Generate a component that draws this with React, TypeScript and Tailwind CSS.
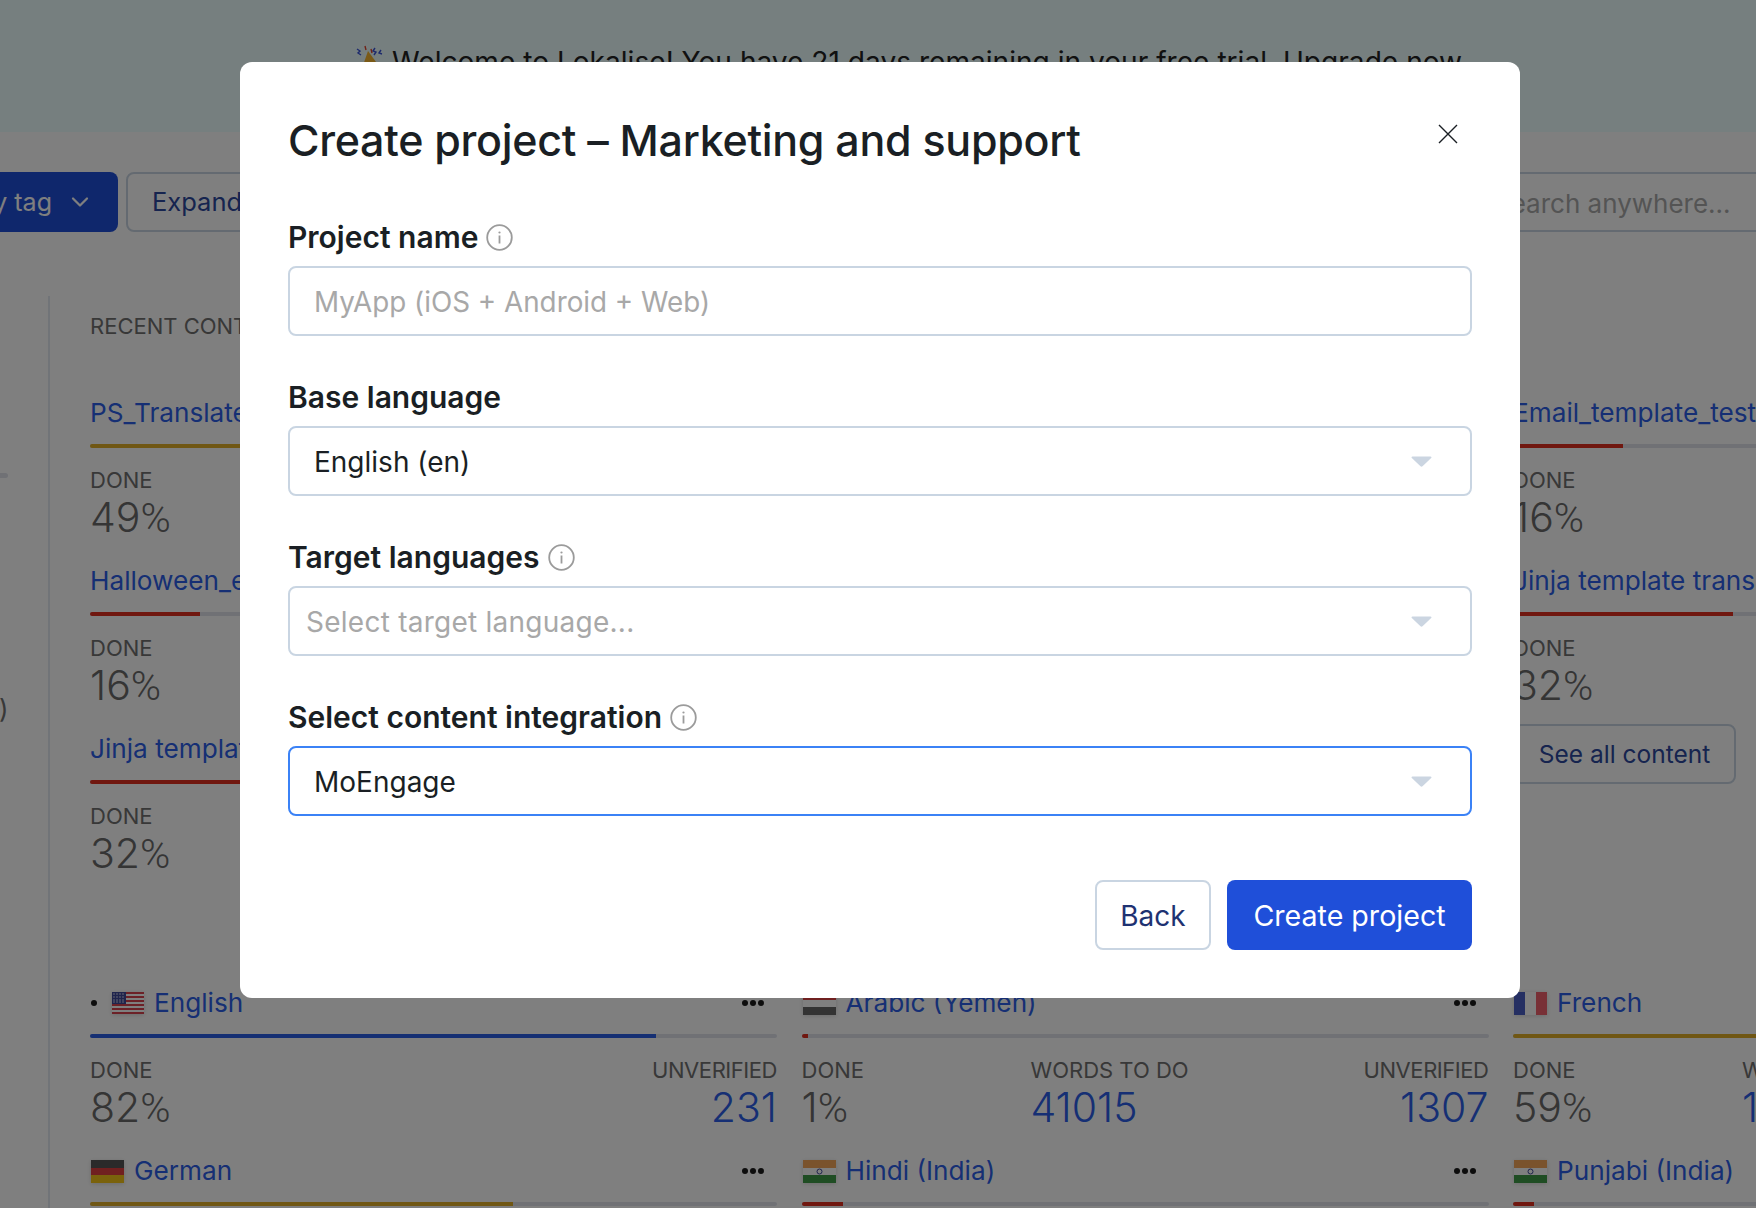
import { ChevronDown } from 'lucide-react';

const amber = 'bg-[#e0ae28]';
const red = 'bg-[#e02f1f]';
const blue = 'bg-[#2a5fe6]';

type Stat = { label: string; value: string; link?: boolean };

function Flag({ name }: { name: string }) {
	if (name === 'us') {
		return (
			<svg width="32" height="22" viewBox="0 0 32 22" className="shrink-0 drop-shadow-sm">
				<rect width="32" height="22" fill="#fff" />
				{[0, 4, 8, 12, 16, 20].map((y) => (
					<rect key={y} y={y} width="32" height="2" fill="#d8424f" />
				))}
				<rect width="14" height="12" fill="#3f4a9a" />
				{[2, 5, 8, 11].map((x) =>
					[2, 5, 8, 10].map((y) => <circle key={`${x}-${y}`} cx={x} cy={y} r="0.7" fill="#fff" />),
				)}
			</svg>
		);
	}
	if (name === 'de') {
		return (
			<svg width="33" height="23" viewBox="0 0 33 23" className="shrink-0 drop-shadow-sm">
				<rect width="33" height="8" fill="#555" />
				<rect y="8" width="33" height="8" fill="#e04040" />
				<rect y="15" width="33" height="8" fill="#f5c518" />
			</svg>
		);
	}
	if (name === 'ye') {
		return (
			<svg width="33" height="23" viewBox="0 0 33 23" className="shrink-0 drop-shadow-sm">
				<rect width="33" height="8" fill="#e04040" />
				<rect y="8" width="33" height="8" fill="#fff" />
				<rect y="15" width="33" height="8" fill="#666" />
			</svg>
		);
	}
	if (name === 'fr') {
		return (
			<svg width="33" height="23" viewBox="0 0 33 23" className="shrink-0 drop-shadow-sm">
				<rect width="11" height="23" fill="#4a5fc4" />
				<rect x="11" width="11" height="23" fill="#fff" />
				<rect x="22" width="11" height="23" fill="#f0616d" />
			</svg>
		);
	}
	return (
		<svg width="33" height="23" viewBox="0 0 33 23" className="shrink-0 drop-shadow-sm">
			<rect width="33" height="8" fill="#f5a65a" />
			<rect y="8" width="33" height="8" fill="#fff" />
			<rect y="15" width="33" height="8" fill="#3f9a46" />
			<circle cx="16.5" cy="11.5" r="2.5" fill="none" stroke="#3f4a9a" strokeWidth="1" />
		</svg>
	);
}

function Dots() {
	return (
		<div className="ml-auto mr-[13px] flex gap-[2px]">
			<span className="h-[6px] w-[6px] rounded-full bg-[#1a1a1a]" />
			<span className="h-[6px] w-[6px] rounded-full bg-[#1a1a1a]" />
			<span className="h-[6px] w-[6px] rounded-full bg-[#1a1a1a]" />
		</div>
	);
}

function Value({ text }: { text: string }) {
	if (!text.endsWith('%')) return <>{text}</>;
	return (
		<>
			{text.slice(0, -1)}
			<span className="font-['Roboto',sans-serif]">%</span>
		</>
	);
}

function Card({
	title,
	flag,
	bullet,
	pct,
	color,
	stats,
	menu,
}: {
	title: string;
	flag?: string;
	bullet?: boolean;
	pct: number;
	color: string;
	stats: (Stat | null)[];
	menu?: boolean;
}) {
	return (
		<div className="h-[168px] min-w-0">
			<div className="flex h-[34px] items-center whitespace-nowrap text-[26.2px] leading-[34px] text-[#2c5fe8]">
				{bullet && <span className="ml-[1px] mr-[14px] h-[6px] w-[6px] rounded-full bg-[#1a1a1a]" />}
				{flag && (
					<span className="ml-[1px] mr-[10px] flex">
						<Flag name={flag} />
					</span>
				)}
				<span>{title}</span>
				{menu && <Dots />}
			</div>
			<div className="mt-[14px] h-[4px] overflow-hidden rounded-full bg-[#e0e3eb]">
				<div className={`h-full ${color}`} style={{ width: `${pct}%` }} />
			</div>
			<div className="mt-[18px] grid grid-cols-3">
				{stats.map((s, i) =>
					s ? (
						<div key={i} className={i === 2 ? 'text-right' : ''}>
							<div
								className={`whitespace-nowrap text-[22px] leading-[28px] text-[#707070] ${
									i === 2 ? 'tracking-[-0.45px]' : ''
								}`}
							>
								{s.label}
							</div>
							<div
								className={`-mt-[2px] whitespace-nowrap text-[41px] leading-[50px] font-[350] ${
									s.link ? 'text-[#2c5fe8]' : 'text-[#6a6a6a]'
								}`}
							>
								<Value text={s.value} />
							</div>
						</div>
					) : (
						<div key={i} />
					),
				)}
			</div>
		</div>
	);
}

function done(value: string): (Stat | null)[] {
	return [{ label: 'DONE', value }, null, null];
}

function InfoIcon() {
	return (
		<svg width="27" height="27" viewBox="0 0 27 27" className="ml-[8px] shrink-0">
			<circle cx="13.5" cy="13.5" r="12.3" fill="none" stroke="#9b9b9b" strokeWidth="1.8" />
			<circle cx="13.5" cy="8.5" r="1.1" fill="#9b9b9b" />
			<rect x="12.6" y="11.5" width="1.8" height="8" fill="#9b9b9b" />
		</svg>
	);
}

function Caret() {
	return (
		<svg width="21" height="11" viewBox="0 0 21 11" className="shrink-0">
			<path d="M1.5 0.5h18c.9 0 1.3 1 .7 1.6l-8.7 8.2c-.6.5-1.4.5-2 0L.8 2.1C.2 1.5.6.5 1.5.5z" fill="#cbd5e1" />
		</svg>
	);
}

function Field({ label, info, children }: { label: string; info?: boolean; children: React.ReactNode }) {
	return (
		<div className="mb-[41px]">
			<div className="mb-[9px] flex h-[40px] items-center text-[30px] leading-[40px] font-semibold text-[#1a1f24]">
				{label}
				{info && <InfoIcon />}
			</div>
			{children}
		</div>
	);
}

function SelectBox({
	text,
	muted,
	focused,
}: {
	text: string;
	muted?: boolean;
	focused?: boolean;
}) {
	return (
		<div
			className={`flex h-[70px] items-center justify-between rounded-lg border-2 bg-white pr-[38px] text-[28px] ${
				focused ? 'border-[#3b82f6]' : 'border-[#c9d5e2]'
			} ${muted ? 'pl-[16px] text-[#a8a8a8]' : 'pl-[24px] text-[#1a1f24]'}`}
		>
			<span className={`pt-[2px] ${muted ? 'tracking-[0.25px]' : ''}`}>{text}</span>
			<Caret />
		</div>
	);
}

export default function App() {
	return (
		<div className="relative h-[1208px] overflow-hidden bg-white font-['Inter',sans-serif]">
			<div className="flex h-[132px] items-start bg-[#ecfeff] pl-[355px] pt-[45px]">
				<svg width="30" height="30" viewBox="0 0 30 30" className="mr-[7px] shrink-0">
					<path d="M5 29 L13 6 L24 21 Z" fill="#f5b52e" />
					<path d="M2 4l3 2-2 2 3 2M20 3l-2 3 3 1-2 3M26 5l-2 3 3 1" fill="none" stroke="#3a55d9" strokeWidth="1.4" />
					<path d="M10 1l1 4M16 4l1 4" fill="none" stroke="#e0452f" strokeWidth="1.4" />
				</svg>
				<span className="whitespace-nowrap text-[28.1px] leading-[34px] text-[#222]">
					Welcome to Lokalise! You have 21 days remaining in your free trial. Upgrade now
				</span>
			</div>

			<div className="mt-[40px] flex h-[60px]">
				<div className="flex w-[118px] shrink-0 items-center justify-end gap-[14px] overflow-hidden rounded-r-lg bg-[#1f4fd9] pr-[24px] text-[25px] whitespace-nowrap text-white">
					<span className="pt-[2px]">Filter by tag</span>
					<ChevronDown size={28} strokeWidth={1.9} className="shrink-0" />
				</div>
				<div className="ml-[8px] flex w-[300px] shrink-0 items-center rounded-lg border-2 border-[#c9d5e2] px-[24px] text-[25.5px] whitespace-nowrap text-[#2c489e]">
					Expand all
				</div>
				<div className="ml-[1040px] flex w-[500px] shrink-0 items-center rounded-lg border-2 border-[#c9d5e2] pl-[26px] pt-[2px] text-[26px] text-[#a9a9a9]">
					Search anywhere...
				</div>
			</div>

			<div className="mt-[64px] flex">
				<div className="h-[912px] w-[50px] shrink-0 border-r-2 border-[#e2e8f0] pt-[177px]">
					<div className="h-[5px] w-[8px] rounded-r-full bg-[#e0e3eb]" />
					<div className="mt-[214px] text-[26px] leading-[34px] text-[#707070]">
						<span className="ml-[-1px]">)</span>
					</div>
				</div>
				<div className="pl-[40px]">
					<div className="mt-[15px] h-[30px] whitespace-nowrap text-[22px] leading-[30px] text-[#707070]">RECENT CONTENT</div>
					<div className="mt-[55px] grid grid-cols-[repeat(3,687px)] gap-x-[24.5px]">
						<Card title="PS_Translate_demo" pct={49} color={amber} stats={done('49%')} />
						<Card title="Onboarding_email" pct={60} color={amber} stats={done('60%')} />
						<Card title="Email_template_test" pct={16} color={red} stats={done('16%')} />
						<Card title="Halloween_email" pct={16} color={red} stats={done('16%')} />
						<Card title="Welcome_series" pct={25} color={red} stats={done('25%')} />
						<Card title="Jinja template translation" pct={32} color={red} stats={done('32%')} />
						<Card title="Jinja template" pct={32} color={red} stats={done('32%')} />
						<div />
						<div>
							<div className="-mt-[8px] flex h-[60px] w-[223px] items-center justify-center rounded-lg border-2 border-[#c9d5e2] text-[24.5px] whitespace-nowrap text-[#2c489e]">
								See all content
							</div>
						</div>
					</div>
					<div className="mt-[86px] grid grid-cols-[repeat(3,687px)] gap-x-[24.5px]">
						<Card
							title="English"
							flag="us"
							bullet
							menu
							pct={82.4}
							color={blue}
							stats={[{ label: 'DONE', value: '82%' }, null, { label: 'UNVERIFIED', value: '231', link: true }]}
						/>
						<Card
							title="Arabic (Yemen)"
							flag="ye"
							menu
							pct={1}
							color={red}
							stats={[
								{ label: 'DONE', value: '1%' },
								{ label: 'WORDS TO DO', value: '41015', link: true },
								{ label: 'UNVERIFIED', value: '1307', link: true },
							]}
						/>
						<Card
							title="French"
							flag="fr"
							menu
							pct={59}
							color={amber}
							stats={[
								{ label: 'DONE', value: '59%' },
								{ label: 'WORDS TO DO', value: '16820', link: true },
								{ label: 'UNVERIFIED', value: '512', link: true },
							]}
						/>
						<Card title="German" flag="de" menu pct={61.6} color={amber} stats={done('62%')} />
						<Card title="Hindi (India)" flag="in" menu pct={6} color={red} stats={done('6%')} />
						<Card title="Punjabi (India)" flag="in" menu pct={3} color={red} stats={done('3%')} />
					</div>
				</div>
			</div>

			<div className="absolute inset-0 flex justify-center bg-black/50 pl-[4px] pt-[62px]">
				<div className="h-[936px] w-[1280px] rounded-xl bg-white px-[48px] pt-[48px] pb-[48px]">
					<div className="relative mb-[47px] h-[60px]">
						<h2 className="text-[43px] leading-[60px] font-medium tracking-[-0.3px] whitespace-nowrap text-[#1a1f24]">
							Create project – Marketing and support
						</h2>
						<svg width="20" height="20" viewBox="0 0 20 20" className="absolute top-[14px] right-[14px]">
							<path d="M1 1l18 18M19 1L1 19" stroke="#1a1f24" strokeWidth="1.4" />
						</svg>
					</div>
					<Field label="Project name" info>
						<input
							placeholder="MyApp (iOS + Android + Web)"
							className="h-[70px] w-full rounded-lg border-2 border-[#c9d5e2] px-[24px] pt-[2px] text-[27.8px] outline-none placeholder:text-[#a8a8a8]"
						/>
					</Field>
					<Field label="Base language">
						<SelectBox text="English (en)" />
					</Field>
					<Field label="Target languages" info>
						<SelectBox text="Select target language..." muted />
					</Field>
					<Field label="Select content integration" info>
						<SelectBox text="MoEngage" focused />
					</Field>
					<div className="mt-[64px] flex justify-end gap-[16px]">
						<button className="h-[70px] w-[116px] rounded-lg border-2 border-[#c9d5e2] bg-white pt-[2px] text-[28px] text-[#1e3272]">
							Back
						</button>
						<button className="h-[70px] w-[245px] rounded-lg bg-[#1f4fd9] pt-[2px] text-[28.6px] text-white">
							Create project
						</button>
					</div>
				</div>
			</div>
		</div>
	);
}
